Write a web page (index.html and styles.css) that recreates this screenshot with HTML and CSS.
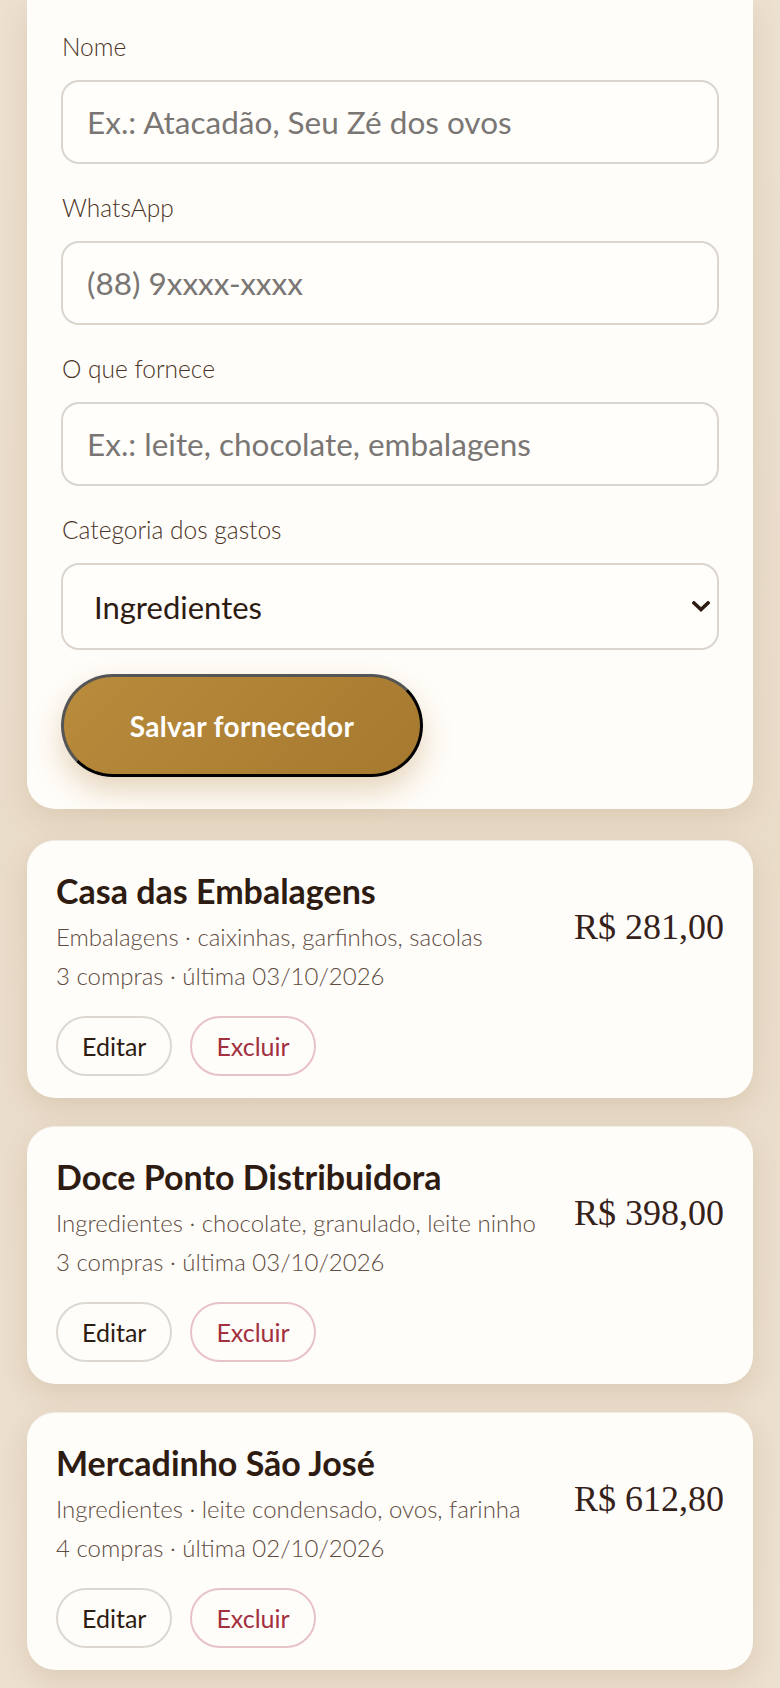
FILE: index.html
```html
<!DOCTYPE html>
<html lang="pt-BR">
<head>
  <meta charset="UTF-8" />
  <meta name="viewport" content="width=device-width, initial-scale=1" />
  <title>Fornecedores</title>
  <link rel="stylesheet" href="styles.css">
</head>
<body>
  <div class="page">
    <form class="form-card">
      <label class="field">
        <span class="field-label">Nome</span>
        <input type="text" placeholder="Ex.: Atacadão, Seu Zé dos ovos" />
      </label>
      <label class="field">
        <span class="field-label">WhatsApp</span>
        <input type="tel" placeholder="(88) 9xxxx-xxxx" />
      </label>
      <label class="field">
        <span class="field-label">O que fornece</span>
        <input type="text" placeholder="Ex.: leite, chocolate, embalagens" />
      </label>
      <label class="field">
        <span class="field-label">Categoria dos gastos</span>
        <div class="select-wrap">
          <select>
            <option>Ingredientes</option>
            <option>Embalagens</option>
            <option>Outros</option>
          </select>
          <svg class="select-arrow" width="18" height="11" viewBox="0 0 18 11">
            <path d="M2 2 L9 8.5 L16 2" fill="none" stroke="#2e1c12" stroke-width="3.6" stroke-linecap="square" />
          </svg>
        </div>
      </label>
      <button type="button" class="save-btn">Salvar fornecedor</button>
    </form>

    <div class="supplier">
      <div class="supplier-top">
        <div class="supplier-info">
          <div class="supplier-name">Casa das Embalagens</div>
          <div class="supplier-sub">Embalagens · caixinhas, garfinhos, sacolas</div>
          <div class="supplier-sub">3 compras · última 03/10/2026</div>
        </div>
        <div class="supplier-total">R$ 281,00</div>
      </div>
      <div class="supplier-actions">
        <button class="pill">Editar</button>
        <button class="pill pill-danger">Excluir</button>
      </div>
    </div>

    <div class="supplier">
      <div class="supplier-top">
        <div class="supplier-info">
          <div class="supplier-name">Doce Ponto Distribuidora</div>
          <div class="supplier-sub">Ingredientes · chocolate, granulado, leite ninho</div>
          <div class="supplier-sub">3 compras · última 03/10/2026</div>
        </div>
        <div class="supplier-total">R$ 398,00</div>
      </div>
      <div class="supplier-actions">
        <button class="pill">Editar</button>
        <button class="pill pill-danger">Excluir</button>
      </div>
    </div>

    <div class="supplier">
      <div class="supplier-top">
        <div class="supplier-info">
          <div class="supplier-name">Mercadinho São José</div>
          <div class="supplier-sub">Ingredientes · leite condensado, ovos, farinha</div>
          <div class="supplier-sub">4 compras · última 02/10/2026</div>
        </div>
        <div class="supplier-total">R$ 612,80</div>
      </div>
      <div class="supplier-actions">
        <button class="pill">Editar</button>
        <button class="pill pill-danger">Excluir</button>
      </div>
    </div>
  </div>
</body>
</html>
```

FILE: styles.css
```css
body {
  margin: 0;
  padding: 0;
  font-family: 'Lato', 'Noto Sans', sans-serif;
  background: linear-gradient(180deg, #ece0cf 0%, #e9dcc9 50%, #ece0cf 100%);
  color: #2e1c12;
  min-height: 100vh;
}

.page {
  padding: 0 27px 20px;
  display: flex;
  flex-direction: column;
}

.form-card {
  background: #fffdf9;
  border-radius: 0 0 28px 28px;
  padding: 31px 34px 32px;
  box-shadow: 0 10px 28px rgba(140, 105, 60, 0.14);
  display: flex;
  flex-direction: column;
  gap: 28px;
  margin-bottom: 31px;
}

.field {
  display: flex;
  flex-direction: column;
  gap: 18px;
}

.field-label {
  font-size: 24.5px;
  font-weight: 300;
  line-height: 31px;
  color: #4a3327;
  padding-left: 1px;
}

.field input,
.field select {
  width: 100%;
  height: 84px;
  box-sizing: border-box;
  border: 2px solid #dcd5ce;
  border-radius: 18px;
  background: #fffefb;
  font-family: inherit;
  font-size: 31.5px;
  color: #2e1c12;
  padding: 0 24px;
  outline: none;
}

.field input::placeholder {
  color: #7a7674;
  font-weight: 400;
}

.select-wrap {
  position: relative;
}

.field select {
  appearance: none;
  -webkit-appearance: none;
  height: 87px;
  padding-left: 31px;
  padding-right: 40px;
  font-size: 31px;
}

.select-arrow {
  position: absolute;
  right: 9px;
  top: 38px;
  pointer-events: none;
}

.save-btn {
  align-self: flex-start;
  width: 362px;
  height: 103px;
  margin-top: -4px;
  border-radius: 60px;
  border: 3px solid;
  border-color: #555 #000 #000 #555;
  background: linear-gradient(135deg, #b98b3c 0%, #a5792f 100%);
  color: #fff;
  font-family: inherit;
  font-size: 28px;
  font-weight: 700;
  letter-spacing: 0.3px;
  box-shadow: 0 14px 30px rgba(176, 128, 60, 0.32);
  cursor: pointer;
}

.supplier {
  background: #fffdf9;
  border-radius: 28px;
  border-top: 1px solid #f1ece6;
  padding: 31px 29px 22px;
  margin-bottom: 28px;
  box-shadow: 0 10px 26px rgba(140, 105, 60, 0.16);
}

.supplier-top {
  display: flex;
  align-items: center;
  gap: 16px;
}

.supplier-info {
  flex: 1;
}

.supplier-name {
  font-size: 34px;
  font-weight: 700;
  line-height: 38px;
  color: #2e1c12;
  margin-bottom: 7px;
}

.supplier-sub {
  font-size: 24px;
  font-weight: 300;
  line-height: 39px;
  color: #5e4c42;
}

.supplier-total {
  font-family: 'Liberation Serif', 'DejaVu Serif', serif;
  font-size: 36px;
  color: #35211a;
  white-space: nowrap;
  padding-bottom: 14px;
}

.supplier-actions {
  display: flex;
  gap: 18px;
  margin-top: 21px;
}

.pill {
  height: 60px;
  padding: 0 24px;
  border-radius: 30px;
  border: 2px solid #ddd7d1;
  background: #fffdf9;
  font-family: inherit;
  font-size: 25px;
  font-weight: 400;
  color: #2e1c12;
  cursor: pointer;
}

.pill-danger {
  border-color: #e7c3c8;
  color: #a3303f;
}
```
